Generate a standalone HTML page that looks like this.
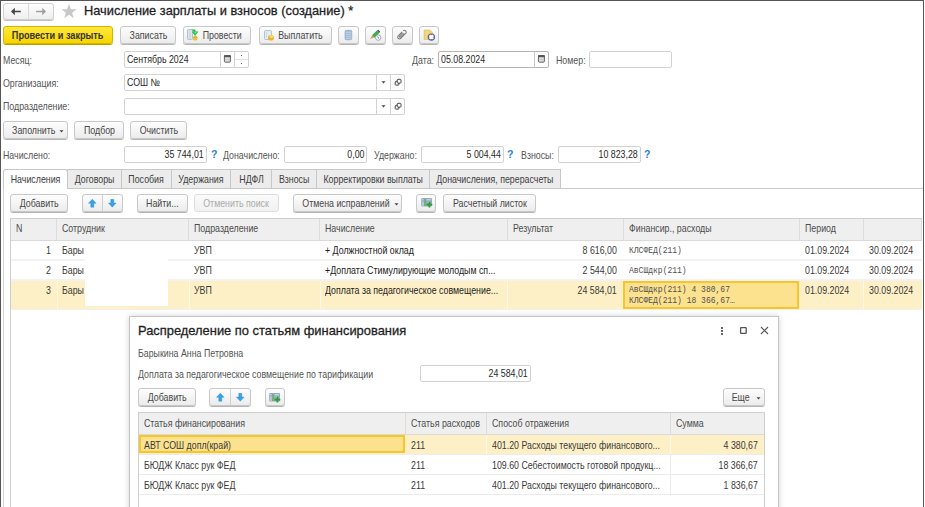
<!DOCTYPE html>
<html><head><meta charset="utf-8">
<style>
*{box-sizing:border-box;margin:0;padding:0}
html,body{width:925px;height:507px;overflow:hidden;background:#fff}
body{position:relative;font-family:"Liberation Sans",sans-serif;font-size:10.5px;color:#4a4a4a}
.s{display:inline-block;transform:scaleX(.84)}
.btn.y .s{transform:scaleX(.87)}
.sl{transform-origin:0 50%}
.sr{transform-origin:100% 50%}
.a{position:absolute}
.win{position:absolute;left:0;top:0;width:924px;height:507px;border-left:1px solid #555;border-top:1px solid #555;border-right:1px solid #555}
.btn{position:absolute;height:18px;border:1px solid #c8c8c8;border-radius:3px;background:linear-gradient(#fdfdfd,#ececec);box-shadow:0 1px 0 #b5b5b5;color:#484848;text-align:center;line-height:16px;white-space:nowrap;display:flex;justify-content:center}
.btn.y{background:linear-gradient(#ffe83a,#f7d500);border-color:#d6b400;color:#333;font-weight:bold;box-shadow:0 1px 0 #b8a000}
.btn.dis{color:#aaa;box-shadow:none;background:linear-gradient(#fafafa,#f1f1f1);border-color:#ddd}
.fld{position:absolute;height:17px;border:1px solid #d2d2d2;border-radius:2px;background:#fff;color:#2a2a2a;line-height:15px;padding-left:2px;white-space:nowrap}
.lbl{position:absolute;color:#555;white-space:nowrap;line-height:12px}
.q{position:absolute;color:#1f82d2;font-weight:bold;line-height:12px;margin-top:-1px}
.tab{position:absolute;top:169px;height:19px;border:1px solid #c8c8c8;border-bottom:none;background:#ececec;color:#404040;line-height:18px;text-align:center;white-space:nowrap;display:flex;justify-content:center}
.tab.act{background:#fff;height:20px;border-radius:3px 3px 0 0}
.th{position:absolute;height:22px;background:#efefef;color:#4d4d4d;line-height:19px;white-space:nowrap;border-right:1px solid #dcdcdc}
.td{position:absolute;color:#3a3a3a;white-space:nowrap;line-height:12px}
.sep{position:absolute;background:#e4e4e4}
.mono{font-family:"Liberation Mono",monospace;font-size:9px;color:#505050;transform:scaleX(.89);transform-origin:0 0}
</style></head><body>
<div class="win"></div>

<!-- nav -->
<div class="a" style="left:3px;top:2.5px;width:51px;height:17px;border:1px solid #cfcfcf;border-radius:3px;background:linear-gradient(#fdfdfd,#efefef);box-shadow:0 1px 0 #c0c0c0"></div>
<div class="a" style="left:28px;top:3.5px;width:1px;height:16px;background:#d8d8d8"></div>
<svg class="a" style="left:10px;top:7px" width="12" height="9" viewBox="0 0 12 9"><path d="M1 4.5L4.8 0.8V8.2Z" fill="#444"/><path d="M4 4.5H10.8" stroke="#444" stroke-width="1.5"/></svg>
<svg class="a" style="left:35px;top:7px" width="12" height="9" viewBox="0 0 12 9"><path d="M11 4.5L7.2 0.8V8.2Z" fill="#a0a0a0"/><path d="M1 4.5H8" stroke="#a0a0a0" stroke-width="1.5"/></svg>
<svg class="a" style="left:61px;top:4px" width="16" height="15" viewBox="0 0 16 15"><path d="M8 0L10 5.3H15.6L11.1 8.7L12.8 14.2L8 10.8L3.2 14.2L4.9 8.7L0.4 5.3H6Z" fill="#c8c8c8"/></svg>
<div class="a" style="left:84px;top:3px;font-size:13.5px;letter-spacing:0;color:#1e1e1e;line-height:15px;white-space:nowrap;-webkit-text-stroke:0.3px #1e1e1e;transform:scaleX(.948);transform-origin:0 0">Начисление зарплаты и взносов (создание) *</div>

<!-- toolbar -->
<div class="btn y" style="left:3px;top:26px;width:110px"><span class="s">Провести и закрыть</span></div>
<div class="btn" style="left:120px;top:26px;width:56px"><span class="s">Записать</span></div>
<div class="btn" style="left:183px;top:26px;width:68px;padding-left:11px"><span class="s">Провести</span></div>
<svg class="a" style="left:186px;top:28px" width="14" height="14" viewBox="186 28 14 14"><rect x="187.5" y="29.5" width="5" height="10" rx="0.8" fill="#dde4ec" stroke="#aab6c4" stroke-width="0.8"/><path d="M189 32H191M189 34H191M189 36H191M189 38H191" stroke="#b8c4d0" stroke-width="0.6"/><rect x="193" y="36" width="4.5" height="4.5" rx="1.5" fill="#e6c442"/><path d="M193 37.2H197.5" stroke="#c9a227" stroke-width="0.6"/><path d="M191 29.5H195L196 31.5H198.5L195 36L191.8 31.5H194Z" fill="#22c04a"/><path d="M194.3 31.8L195 34.3L197 31.8Z" fill="#5ef08a"/></svg>
<div class="btn" style="left:259px;top:26px;width:73px;padding-left:10px"><span class="s">Выплатить</span></div>
<svg class="a" style="left:262px;top:28px" width="14" height="14" viewBox="262 28 14 14"><rect x="264.5" y="30.5" width="7" height="9" rx="1" fill="#e4ebf3" stroke="#a9bccf" stroke-width="0.9"/><path d="M266.5 32V38" stroke="#c6d3e0" stroke-width="0.7"/><ellipse cx="271" cy="37.8" rx="3" ry="2.8" fill="#e9b52a"/><ellipse cx="271.5" cy="36.6" rx="2" ry="1.3" fill="#f8de6a"/></svg>
<div class="btn" style="left:338px;top:26px;width:21px"></div>
<svg class="a" style="left:344px;top:29px" width="10" height="12" viewBox="344 29 10 12"><rect x="345" y="30.3" width="6.8" height="9.5" rx="1.4" fill="#9fb9d3" stroke="#86a3c0" stroke-width="0.6"/><path d="M345.5 32.3H351.3M345.5 34.3H351.3M345.5 36.3H351.3M345.5 38.3H351.3" stroke="#d6e3ef" stroke-width="0.6"/></svg>
<div class="btn" style="left:365px;top:26px;width:21px"></div>
<svg class="a" style="left:368px;top:28px" width="16" height="14" viewBox="368 28 16 14"><path d="M372.3 35.2L377.3 30.6L379.3 32.6L374.5 37.4Z" fill="#3cb04a" stroke="#2a7a30" stroke-width="0.4"/><path d="M377.3 30.6L378.2 29.8L380.2 31.8L379.3 32.6Z" fill="#3a4a5a"/><path d="M372.3 35.2L374.5 37.4L370 39Z" fill="#d2a060"/><circle cx="378.2" cy="37.6" r="2.7" fill="#fff" stroke="#7f9ab8" stroke-width="0.8"/><path d="M377.4 36.8L379 38.4" stroke="#333" stroke-width="0.8"/></svg>
<div class="btn" style="left:392px;top:26px;width:21px"></div>
<svg class="a" style="left:396px;top:28px" width="12" height="13" viewBox="396 28 12 13"><g transform="rotate(45 402 34.6)" fill="none" stroke="#7a7a7a" stroke-width="1"><path d="M400.2 32.5V38.2A1.8 1.8 0 0 0 403.8 38.2V31.2A1.8 1.8 0 0 0 400.2 31.2"/><path d="M401.3 33V37.4A0.7 0.7 0 0 0 402.7 37.4V32.2"/></g></svg>
<div class="btn" style="left:419px;top:26px;width:20px"></div>
<svg class="a" style="left:422px;top:28px" width="14" height="14" viewBox="422 28 14 14"><path d="M424 30H430L433 33V39.5H424Z" fill="#efd27a" stroke="#d9b650" stroke-width="0.5"/><path d="M425.5 32H428M425.5 34H428" stroke="#f8e8b0" stroke-width="0.7"/><circle cx="431.4" cy="37.1" r="3.1" fill="#fff" stroke="#3d6fb5" stroke-width="1.2"/><path d="M431.4 34V35.2M431.4 39V40.2M428.3 37.1H429.5M433.3 37.1H434.5" stroke="#e04040" stroke-width="1"/></svg>

<!-- fields -->
<div class="lbl" style="left:3px;top:54px"><span class="s sl">Месяц:</span></div>
<div class="fld" style="left:124px;top:51px;width:125px"><span class="s sl">Сентябрь 2024</span></div>
<div class="a" style="left:220px;top:52px;width:1px;height:15px;background:#d2d2d2"></div>
<div class="a" style="left:234px;top:52px;width:1px;height:15px;background:#d2d2d2"></div>
<div class="a" style="left:235px;top:59px;width:13px;height:1px;background:#e2e2e2"></div>
<svg class="a" style="left:223px;top:54px" width="9" height="10" viewBox="0 0 9 10"><rect x="1.4" y="1.6" width="6" height="6.6" rx="1" fill="#dcdcdc" stroke="#555" stroke-width="0.9"/><rect x="1" y="1.2" width="6.8" height="2" fill="#555"/><path d="M2.5 5.5H6.5" stroke="#bbb" stroke-width="0.5"/></svg>
<div class="a" style="left:241px;top:55px;width:1px;height:1px;background:#555"></div>
<div class="a" style="left:241px;top:63px;width:1px;height:1px;background:#555"></div>

<div class="lbl" style="left:412px;top:54px"><span class="s sl">Дата:</span></div>
<div class="fld" style="left:438px;top:51px;width:111px;border-color:#b5b5b5"><span class="s sl">05.08.2024</span></div>
<div class="a" style="left:534px;top:52px;width:1px;height:15px;background:#c8c8c8"></div>
<svg class="a" style="left:537px;top:54px" width="9" height="10" viewBox="0 0 9 10"><rect x="1.4" y="1.6" width="6" height="6.6" rx="1" fill="#dcdcdc" stroke="#555" stroke-width="0.9"/><rect x="1" y="1.2" width="6.8" height="2" fill="#555"/><path d="M2.5 5.5H6.5" stroke="#bbb" stroke-width="0.5"/></svg>
<div class="lbl" style="left:556px;top:54px"><span class="s sl">Номер:</span></div>
<div class="fld" style="left:589px;top:51px;width:83px"></div>

<div class="lbl" style="left:3px;top:77px"><span class="s sl">Организация:</span></div>
<div class="fld" style="left:124px;top:74px;width:281px"><span class="s sl">СОШ №</span></div>
<div class="a" style="left:376px;top:75px;width:1px;height:15px;background:#d2d2d2"></div>
<div class="a" style="left:390px;top:75px;width:1px;height:15px;background:#d2d2d2"></div>
<svg class="a" style="left:381px;top:81px" width="5" height="3" viewBox="0 0 5 3"><path d="M0.5 0.2H4.5L2.5 2.6Z" fill="#444"/></svg>
<svg class="a" style="left:394px;top:78px" width="8" height="8" viewBox="0 0 8 8"><rect x="1.2" y="3.3" width="3.8" height="3.8" rx="0.8" fill="none" stroke="#444" stroke-width="1"/><rect x="3.2" y="1.3" width="3.8" height="3.8" rx="0.8" fill="#fff" stroke="#444" stroke-width="1"/></svg>

<div class="lbl" style="left:3px;top:100px"><span class="s sl">Подразделение:</span></div>
<div class="fld" style="left:124px;top:98px;width:281px"></div>
<div class="a" style="left:376px;top:99px;width:1px;height:15px;background:#d2d2d2"></div>
<div class="a" style="left:390px;top:99px;width:1px;height:15px;background:#d2d2d2"></div>
<svg class="a" style="left:381px;top:105px" width="5" height="3" viewBox="0 0 5 3"><path d="M0.5 0.2H4.5L2.5 2.6Z" fill="#444"/></svg>
<svg class="a" style="left:394px;top:102px" width="8" height="8" viewBox="0 0 8 8"><rect x="1.2" y="3.3" width="3.8" height="3.8" rx="0.8" fill="none" stroke="#444" stroke-width="1"/><rect x="3.2" y="1.3" width="3.8" height="3.8" rx="0.8" fill="#fff" stroke="#444" stroke-width="1"/></svg>

<div class="btn" style="left:3px;top:121px;width:65px;padding-right:4px"><span class="s">Заполнить</span></div>
<svg class="a" style="left:58.5px;top:130px" width="5" height="3" viewBox="0 0 5 3"><path d="M0.5 0.2H4.5L2.5 2.6Z" fill="#444"/></svg>
<div class="btn" style="left:74px;top:121px;width:50px"><span class="s">Подбор</span></div>
<div class="btn" style="left:130px;top:121px;width:57px"><span class="s">Очистить</span></div>

<!-- totals -->
<div class="lbl" style="left:3px;top:149px"><span class="s sl">Начислено:</span></div>
<div class="fld" style="left:124px;top:146px;width:83px;text-align:right;padding-right:2px"><span class="s sr">35 744,01</span></div>
<div class="q" style="left:211px;top:149px">?</div>
<div class="lbl" style="left:223px;top:149px"><span class="s sl">Доначислено:</span></div>
<div class="fld" style="left:284px;top:146px;width:83px;text-align:right;padding-right:2px"><span class="s sr">0,00</span></div>
<div class="lbl" style="left:374px;top:149px"><span class="s sl">Удержано:</span></div>
<div class="fld" style="left:421px;top:146px;width:83px;text-align:right;padding-right:2px"><span class="s sr">5 004,44</span></div>
<div class="q" style="left:507px;top:149px">?</div>
<div class="lbl" style="left:521px;top:149px"><span class="s sl">Взносы:</span></div>
<div class="fld" style="left:558px;top:146px;width:83px;text-align:right;padding-right:2px"><span class="s sr">10 823,28</span></div>
<div class="q" style="left:644px;top:149px">?</div>

<!-- tabs -->
<div class="a" style="left:3px;top:188px;width:920px;height:1px;background:#c8c8c8"></div>
<div class="a" style="left:3px;top:188px;width:1px;height:319px;background:#d4d4d4"></div>
<div class="tab" style="left:67px;width:55px"><span class="s">Договоры</span></div>
<div class="tab" style="left:121px;width:51px"><span class="s">Пособия</span></div>
<div class="tab" style="left:171px;width:60px"><span class="s">Удержания</span></div>
<div class="tab" style="left:230px;width:42px"><span class="s">НДФЛ</span></div>
<div class="tab" style="left:271px;width:46px"><span class="s">Взносы</span></div>
<div class="tab" style="left:316px;width:114px"><span class="s">Корректировки выплаты</span></div>
<div class="tab" style="left:429px;width:132px"><span class="s">Доначисления, перерасчеты</span></div>
<div class="tab act" style="left:3px;width:65px"><span class="s">Начисления</span></div>

<!-- table toolbar -->
<div class="btn" style="left:10px;top:194px;width:58px"><span class="s">Добавить</span></div>
<div class="btn" style="left:82px;top:194px;width:41px"></div>
<div class="a" style="left:102px;top:195px;width:1px;height:16px;background:#d0d0d0"></div>
<svg class="a" style="left:88px;top:199px" width="9" height="9" viewBox="0 0 9 9"><path d="M4.3 0.2L8.1 4.3H5.8V8.2H2.8V4.3H0.5Z" fill="#35a2ea" stroke="#2a8bd0" stroke-width="0.4"/></svg>
<svg class="a" style="left:108px;top:199px" width="9" height="9" viewBox="0 0 9 9"><path d="M4.3 8.2L8.1 4.1H5.8V0.2H2.8V4.1H0.5Z" fill="#35a2ea" stroke="#2a8bd0" stroke-width="0.4"/></svg>
<div class="btn" style="left:137px;top:194px;width:51px"><span class="s">Найти...</span></div>
<div class="btn dis" style="left:194px;top:194px;width:85px"><span class="s">Отменить поиск</span></div>
<div class="btn" style="left:293px;top:194px;width:109px;padding-right:3px"><span class="s">Отмена исправлений</span></div>
<svg class="a" style="left:394px;top:203px" width="5" height="3" viewBox="0 0 5 3"><path d="M0.5 0.2H4.5L2.5 2.6Z" fill="#444"/></svg>
<div class="btn" style="left:416px;top:194px;width:20px"></div>
<svg class="a" style="left:419.5px;top:197px" width="14" height="12" viewBox="268 392 14 12"><rect x="269.2" y="393" width="10.8" height="8.6" rx="1" fill="#93a9bf"/><path d="M270 394.8H271.5M274.5 394.8H279M271 396.5V401M276.5 396.5V398" stroke="#eef3f8" stroke-width="0.8"/><path d="M273 394V401" stroke="#5cb85c" stroke-width="1.4"/><path d="M277.4 396.8V402.6M274.5 399.7H280.3" stroke="#2f9a2f" stroke-width="1.8"/></svg>
<div class="btn" style="left:443px;top:194px;width:93px"><span class="s">Расчетный листок</span></div>

<!-- main table -->
<div class="a" style="left:10px;top:218px;width:912px;height:289px;border:1px solid #cfcfcf;border-right:none;border-bottom:none"></div>
<div class="th" style="left:11px;top:219px;width:46px;padding-left:5px"><span class="s sl">N</span></div>
<div class="th" style="left:57px;top:219px;width:132px;padding-left:5px"><span class="s sl">Сотрудник</span></div>
<div class="th" style="left:189px;top:219px;width:131px;padding-left:5px"><span class="s sl">Подразделение</span></div>
<div class="th" style="left:320px;top:219px;width:188px;padding-left:5px"><span class="s sl">Начисление</span></div>
<div class="th" style="left:508px;top:219px;width:116px;padding-left:5px"><span class="s sl">Результат</span></div>
<div class="th" style="left:624px;top:219px;width:176px;padding-left:5px"><span class="s sl">Финансир., расходы</span></div>
<div class="th" style="left:800px;top:219px;width:64px;padding-left:5px"><span class="s sl">Период</span></div>
<div class="th" style="left:864px;top:219px;width:58px"></div>
<div class="sep" style="left:11px;top:240px;width:911px;height:1px;background:#dadada"></div>

<!-- rows -->
<div class="sep" style="left:11px;top:259px;width:911px;height:2px;background:#f2f2f2"></div>
<div class="sep" style="left:11px;top:279px;width:911px;height:2px;background:#f2f2f2"></div>
<div class="a" style="left:11px;top:281px;width:911px;height:28px;background:#fdf0c6"></div>
<div class="sep" style="left:57px;top:281px;width:1px;height:28px;background:#fff8e6"></div>
<div class="sep" style="left:189px;top:281px;width:1px;height:28px;background:#fff8e6"></div>
<div class="sep" style="left:320px;top:281px;width:1px;height:28px;background:#fff8e6"></div>
<div class="sep" style="left:507px;top:281px;width:1px;height:28px;background:#fff8e6"></div>
<div class="sep" style="left:863px;top:281px;width:1px;height:28px;background:#fff8e6"></div>
<div class="sep" style="left:11px;top:309px;width:911px;height:1px;background:#f0f0f0"></div>
<div class="a" style="left:623px;top:281px;width:176px;height:28px;background:#fce28f;border:2px solid #f7c62a"></div>

<div class="td" style="left:46px;top:244px"><span class="s sl">1</span></div>
<div class="td" style="left:46px;top:264px"><span class="s sl">2</span></div>
<div class="td" style="left:46px;top:284px"><span class="s sl">3</span></div>
<div class="td" style="left:62px;top:244px"><span class="s sl">Бары</span></div>
<div class="td" style="left:62px;top:264px"><span class="s sl">Бары</span></div>
<div class="td" style="left:62px;top:284px"><span class="s sl">Бары</span></div>
<div class="a" style="left:85px;top:241px;width:83px;height:65px;background:#fff"></div>
<div class="td" style="left:194px;top:244px"><span class="s sl">УВП</span></div>
<div class="td" style="left:194px;top:264px"><span class="s sl">УВП</span></div>
<div class="td" style="left:194px;top:284px"><span class="s sl">УВП</span></div>
<div class="td" style="left:325px;top:244px;color:#222"><span class="s sl">+ Должностной оклад</span></div>
<div class="td" style="left:325px;top:264px;color:#222"><span class="s sl">+Доплата Стимулирующие молодым сп...</span></div>
<div class="td" style="left:325px;top:284px;color:#222"><span class="s sl">Доплата за педагогическое совмещение...</span></div>
<div class="td" style="left:508px;top:244px;width:109px;text-align:right"><span class="s sr">8 616,00</span></div>
<div class="td" style="left:508px;top:264px;width:109px;text-align:right"><span class="s sr">2 544,00</span></div>
<div class="td" style="left:508px;top:284px;width:109px;text-align:right"><span class="s sr">24 584,01</span></div>
<div class="td mono" style="left:629px;top:244.5px">КЛСФЕД(211)</div>
<div class="td mono" style="left:629px;top:264.5px">АвСШдкр(211)</div>
<div class="td mono" style="left:629px;top:285px;line-height:11px">АвСШдкр(211) 4 380,67<br>КЛСФЕД(211) 18 366,67…</div>
<div class="td" style="left:805px;top:244px"><span class="s sl">01.09.2024</span></div>
<div class="td" style="left:805px;top:264px"><span class="s sl">01.09.2024</span></div>
<div class="td" style="left:805px;top:284px"><span class="s sl">01.09.2024</span></div>
<div class="td" style="left:869px;top:244px"><span class="s sl">30.09.2024</span></div>
<div class="td" style="left:869px;top:264px"><span class="s sl">30.09.2024</span></div>
<div class="td" style="left:869px;top:284px"><span class="s sl">30.09.2024</span></div>

<!-- dialog -->
<div class="a" style="left:129px;top:316px;width:650px;height:200px;background:#fff;border:1px solid #c4c4c4;box-shadow:0 0 6px rgba(0,0,0,0.18)"></div>
<div class="a" style="left:138px;top:323px;font-size:13.5px;letter-spacing:0;color:#1e1e1e;line-height:15px;white-space:nowrap;-webkit-text-stroke:0.3px #1e1e1e;transform:scaleX(.955);transform-origin:0 0">Распределение по статьям финансирования</div>
<div class="a" style="left:721px;top:327px;width:2px;height:2px;background:#666;box-shadow:0 3px 0 #666,0 6px 0 #666"></div>
<svg class="a" style="left:739px;top:326px" width="9" height="9" viewBox="0 0 9 9"><rect x="1.6" y="1.6" width="5.6" height="5.8" rx="0.6" fill="none" stroke="#555" stroke-width="1.3"/></svg>
<svg class="a" style="left:760px;top:326px" width="9" height="9" viewBox="0 0 9 9"><path d="M1 1L8 8M8 1L1 8" stroke="#555" stroke-width="1.1"/></svg>
<div class="lbl" style="left:138px;top:347px"><span class="s sl">Барыкина Анна Петровна</span></div>
<div class="lbl" style="left:138px;top:368px"><span class="s sl">Доплата за педагогическое совмещение по тарификации</span></div>
<div class="fld" style="left:420px;top:365px;width:111px;text-align:right;padding-right:2px"><span class="s sr">24 584,01</span></div>

<div class="btn" style="left:138px;top:388px;width:58px"><span class="s">Добавить</span></div>
<div class="btn" style="left:209px;top:388px;width:42px"></div>
<div class="a" style="left:230px;top:389px;width:1px;height:16px;background:#d0d0d0"></div>
<svg class="a" style="left:216px;top:393px" width="9" height="9" viewBox="0 0 9 9"><path d="M4.3 0.2L8.1 4.3H5.8V8.2H2.8V4.3H0.5Z" fill="#35a2ea" stroke="#2a8bd0" stroke-width="0.4"/></svg>
<svg class="a" style="left:236px;top:393px" width="9" height="9" viewBox="0 0 9 9"><path d="M4.3 8.2L8.1 4.1H5.8V0.2H2.8V4.1H0.5Z" fill="#35a2ea" stroke="#2a8bd0" stroke-width="0.4"/></svg>
<div class="btn" style="left:265px;top:388px;width:20px"></div>
<svg class="a" style="left:268px;top:392px" width="14" height="12" viewBox="268 392 14 12"><rect x="269.2" y="393" width="10.8" height="8.6" rx="1" fill="#93a9bf"/><path d="M270 394.8H271.5M274.5 394.8H279M271 396.5V401M276.5 396.5V398" stroke="#eef3f8" stroke-width="0.8"/><path d="M273 394V401" stroke="#5cb85c" stroke-width="1.4"/><path d="M277.4 396.8V402.6M274.5 399.7H280.3" stroke="#2f9a2f" stroke-width="1.8"/></svg>
<div class="btn" style="left:723px;top:388px;width:42px;padding-right:6px"><span class="s">Еще</span></div>
<svg class="a" style="left:756px;top:396.5px" width="5" height="3" viewBox="0 0 5 3"><path d="M0.5 0.2H4.5L2.5 2.6Z" fill="#444"/></svg>

<div class="a" style="left:138px;top:412px;width:627px;height:100px;border:1px solid #cfcfcf"></div>
<div class="th" style="left:139px;top:413px;width:267px;height:21px;line-height:21px;padding-left:5px"><span class="s sl">Статья финансирования</span></div>
<div class="th" style="left:406px;top:413px;width:81px;height:21px;line-height:21px;padding-left:5px"><span class="s sl">Статья расходов</span></div>
<div class="th" style="left:487px;top:413px;width:184px;height:21px;line-height:21px;padding-left:5px"><span class="s sl">Способ отражения</span></div>
<div class="th" style="left:671px;top:413px;width:93px;height:21px;line-height:21px;padding-left:5px;border-right:none"><span class="s sl">Сумма</span></div>
<div class="sep" style="left:139px;top:434px;width:625px;height:1px;background:#dadada"></div>
<div class="a" style="left:139px;top:435px;width:625px;height:19px;background:#fdf0c6"></div>
<div class="sep" style="left:486px;top:435px;width:1px;height:19px;background:#fff8e6"></div>
<div class="sep" style="left:670px;top:435px;width:1px;height:19px;background:#fff8e6"></div>
<div class="a" style="left:139px;top:435px;width:266px;height:18px;background:#fce28f;border:2px solid #f7c62a"></div>
<div class="sep" style="left:139px;top:454px;width:625px;height:1px;background:#ececec"></div>
<div class="sep" style="left:139px;top:474px;width:625px;height:1px;background:#ececec"></div>
<div class="sep" style="left:139px;top:494px;width:625px;height:1px;background:#ececec"></div>
<div class="sep" style="left:670px;top:455px;width:1px;height:39px;background:#ececec"></div>

<div class="td" style="left:144px;top:439px"><span class="s sl">АВТ СОШ допл(край)</span></div>
<div class="td" style="left:144px;top:459px"><span class="s sl">БЮДЖ Класс рук ФЕД</span></div>
<div class="td" style="left:144px;top:479px"><span class="s sl">БЮДЖ Класс рук ФЕД</span></div>
<div class="td" style="left:411px;top:439px"><span class="s sl">211</span></div>
<div class="td" style="left:411px;top:459px"><span class="s sl">211</span></div>
<div class="td" style="left:411px;top:479px"><span class="s sl">211</span></div>
<div class="td" style="left:492px;top:439px"><span class="s sl">401.20 Расходы текущего финансового...</span></div>
<div class="td" style="left:492px;top:459px"><span class="s sl">109.60 Себестоимость готовой продукц...</span></div>
<div class="td" style="left:492px;top:479px"><span class="s sl">401.20 Расходы текущего финансового...</span></div>
<div class="td" style="left:671px;top:439px;width:86.5px;text-align:right"><span class="s sr">4 380,67</span></div>
<div class="td" style="left:671px;top:459px;width:86.5px;text-align:right"><span class="s sr">18 366,67</span></div>
<div class="td" style="left:671px;top:479px;width:86.5px;text-align:right"><span class="s sr">1 836,67</span></div>
</body></html>
